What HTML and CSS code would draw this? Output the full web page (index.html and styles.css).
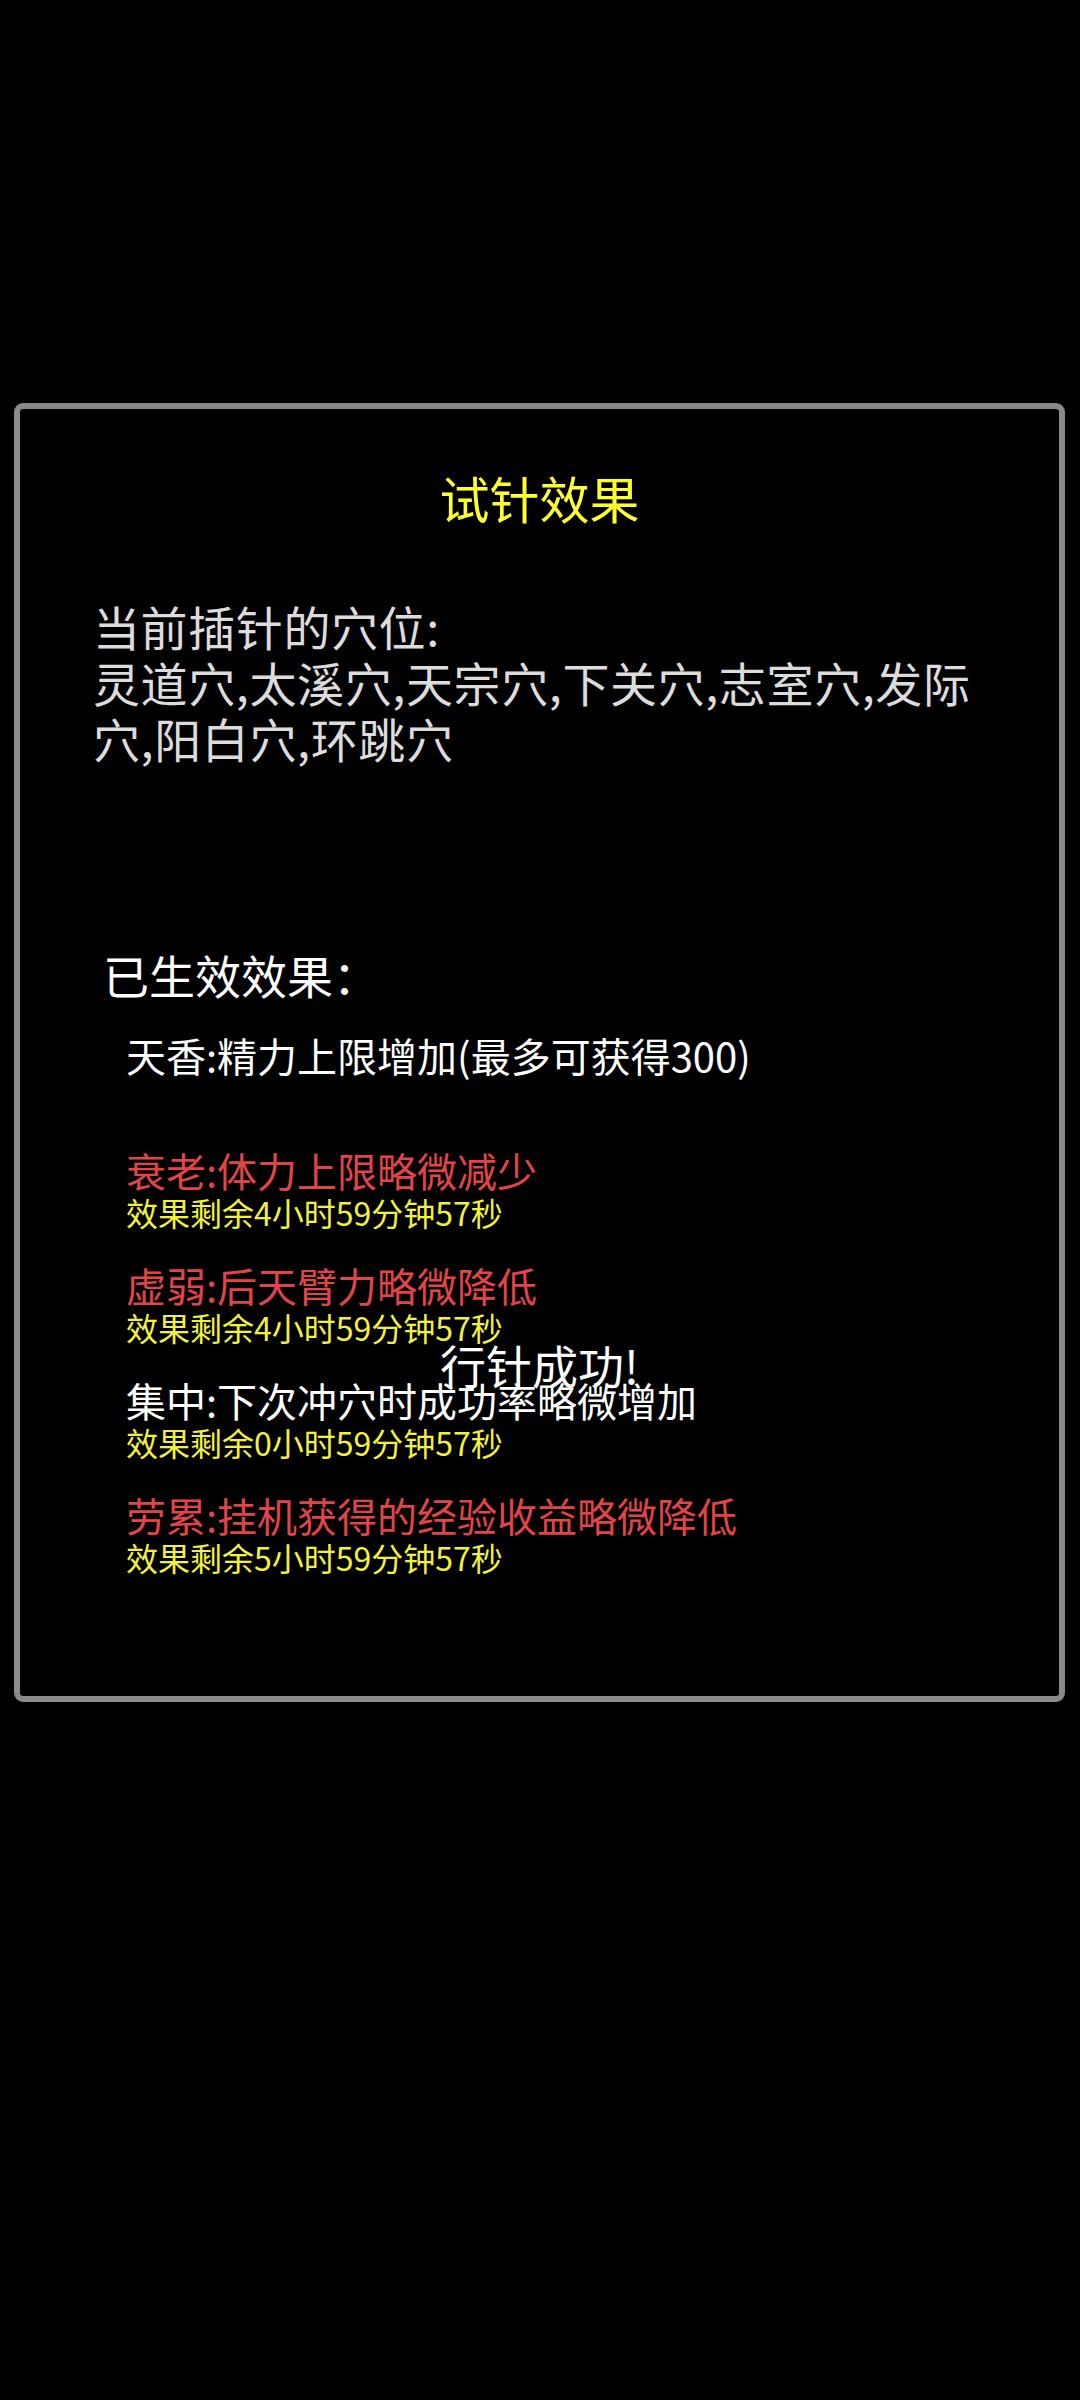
FILE: index.html
```html
<!DOCTYPE html>
<html>
<head>
    <meta charset="utf-8">
    <title>试针效果</title>
    <link rel="stylesheet" href="styles.css">
</head>
<body>

<div class="panel">
    <div class="title">试针效果</div>

    <div class="points">当前插针的穴位:<br>灵道穴,太溪穴,天宗穴,下关穴,志室穴,发际穴,阳白穴,环跳穴</div>

    <div class="section">已生效效果：</div>

    <div class="effects">
        <div class="effect">
            <div class="name good">天香:精力上限增加(最多可获得300)</div>
            <div class="timer"></div>
        </div>
        <div class="effect">
            <div class="name bad">衰老:体力上限略微减少</div>
            <div class="timer">效果剩余4小时59分钟57秒</div>
        </div>
        <div class="effect">
            <div class="name bad">虚弱:后天臂力略微降低</div>
            <div class="timer">效果剩余4小时59分钟57秒</div>
        </div>
        <div class="effect">
            <div class="name good">集中:下次冲穴时成功率略微增加</div>
            <div class="timer">效果剩余0小时59分钟57秒</div>
        </div>
        <div class="effect">
            <div class="name bad">劳累:挂机获得的经验收益略微降低</div>
            <div class="timer">效果剩余5小时59分钟57秒</div>
        </div>
    </div>

    <div class="toast">行针成功!</div>
</div>

</body>
</html>
```

FILE: styles.css
```css
body {
    margin: 0;
    background-color: #000;
    font-family: "Noto Sans CJK SC", "Noto Sans", sans-serif;
    color: #fff;
}
.panel {
    position: relative;
    box-sizing: border-box;
    margin: 403px 15px 0 14px;
    height: 1299px;
    border: 6px solid #8a8a8a;
    border-radius: 9px;
    padding-top: 58px;
}
.title {
    font-size: 50px;
    line-height: 60px;
    text-align: center;
    color: #ffff2e;
}
.points {
    margin-top: 71px;
    margin-left: 73px;
    width: 900px;
    font-size: 47px;
    line-height: 56px;
    letter-spacing: 0.6px;
    color: #dcdcdc;
}
.section {
    margin-top: 180px;
    margin-left: 83px;
    font-size: 46px;
    line-height: 56px;
}
.effects {
    margin-top: 30px;
    margin-left: 106px;
    display: flex;
    flex-direction: column;
    gap: 31px;
}
.effect .name {
    font-size: 40px;
    line-height: 46px;
}
.effect .good {
    color: #fff;
}
.effect .bad {
    color: #e24548;
}
.effect .timer {
    height: 38px;
    font-size: 32px;
    line-height: 38px;
    color: #f2f23c;
}
.toast {
    position: absolute;
    left: 0;
    right: 0;
    top: 927px;
    text-align: center;
    font-size: 46px;
    line-height: 56px;
    color: #fff;
}
```
